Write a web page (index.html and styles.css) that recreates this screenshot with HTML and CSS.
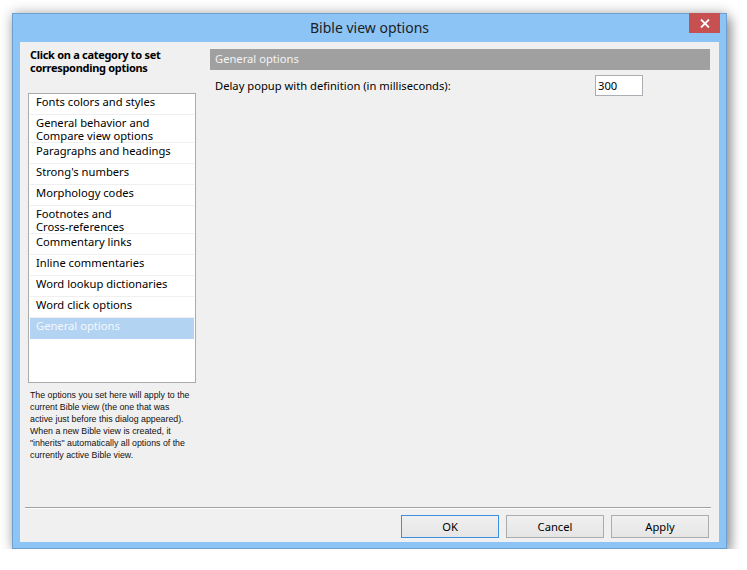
FILE: index.html
```
<!DOCTYPE html>
<html lang="en">
<head>
    <meta charset="UTF-8">
    <title>Bible view options</title>
    <link rel="stylesheet" href="styles.css">
</head>
<body>
    <div class="window">
        <div class="titlebar">
            <span class="title">Bible view options</span>
            <div class="close-btn">
                <svg width="10" height="9" viewBox="0 0 10 9"><path d="M1 0.5 L9 8.5 M9 0.5 L1 8.5" stroke="#fff" stroke-width="1.8" fill="none"/></svg>
            </div>
        </div>
        <div class="content">
            <div class="main">
                <div class="left-col">
                    <div class="left-heading">Click on a category to set<br>corresponding options</div>
                    <div class="cat-list">
                        <div class="cat-item">Fonts colors and styles</div>
                        <div class="cat-item double">General behavior and<br>Compare view options</div>
                        <div class="cat-item">Paragraphs and headings</div>
                        <div class="cat-item">Strong's numbers</div>
                        <div class="cat-item">Morphology codes</div>
                        <div class="cat-item double">Footnotes and<br>Cross-references</div>
                        <div class="cat-item">Commentary links</div>
                        <div class="cat-item">Inline commentaries</div>
                        <div class="cat-item">Word lookup dictionaries</div>
                        <div class="cat-item">Word click options</div>
                        <div class="cat-item selected">General options</div>
                    </div>
                    <div class="note">The options you set here will apply to the<br>current Bible view (the one that was<br>active just before this dialog appeared).<br>When a new Bible view is created, it<br>"inherits" automatically all options of the<br>currently active Bible view.</div>
                </div>
                <div class="right-col">
                    <div class="section-header">General options</div>
                    <div class="option-row">
                        <span class="option-label">Delay popup with definition (in milliseconds):</span>
                        <input class="option-input" type="text" value="300">
                    </div>
                </div>
            </div>
            <div class="separator"></div>
            <div class="buttons">
                <button class="btn default">OK</button>
                <button class="btn">Cancel</button>
                <button class="btn">Apply</button>
            </div>
        </div>
    </div>
</body>
</html>
```
FILE: styles.css
```
html, body { margin: 0; padding: 0; background: #fff; }
body { font-family: "Noto Sans", "Open Sans", sans-serif; font-size: 11.2px; color: #000; }

.window { margin: 13px 0 0 12px; width: 715px; height: 536px; box-sizing: border-box; border: 1px solid #6e9fcf; background: #8cc4f6; padding: 0 7px 6px 7px; box-shadow: 0 0 12px rgba(0,0,0,0.3), 5px 6px 10px rgba(0,0,0,0.28); display: flex; flex-direction: column; }
.titlebar { height: 28px; display: flex; align-items: center; justify-content: center; position: relative; }
.title { font-size: 14px; color: #1e1e1e; margin-top: -1px; }
.close-btn { position: absolute; top: -1px; right: -1px; width: 31px; height: 20px; background: #c75050; display: flex; align-items: center; justify-content: center; }

.content { flex: 1; background: #f0f0f0; display: flex; flex-direction: column; }
.main { height: 465px; display: flex; padding-top: 7px; box-sizing: border-box; }

.left-col { width: 168px; margin-left: 8px; }
.left-heading { font-weight: bold; font-size: 11px; letter-spacing: -0.3px; line-height: 13px; padding-left: 2px; height: 26px; margin: -1px 0 19px 0; white-space: nowrap; }
.cat-list { height: 290px; box-sizing: border-box; border: 1px solid #ababab; background: #fff; padding: 0 1px; }
.cat-item { height: 21px; box-sizing: border-box; padding: 1px 0 0 6px; line-height: 13px; border-bottom: 1px solid #efefef; white-space: nowrap; }
.cat-item.double { height: 28px; }
.cat-item.selected { background: #b3d3f2; color: #f4f8fc; border-bottom: none; }
.note { font-family: "Liberation Sans", Arial, sans-serif; font-size: 8.8px; line-height: 12px; margin-top: 6px; padding-left: 2px; color: #111; white-space: nowrap; }

.right-col { flex: 1; margin: 0 9px 0 14px; }
.section-header { height: 21px; background: #a0a0a0; color: #f4f4f4; line-height: 20px; padding-left: 5px; }
.option-row { display: flex; align-items: center; margin-top: 5px; padding-left: 5px; }
.option-label { width: 380px; }
.option-input { width: 48px; height: 21px; box-sizing: border-box; border: 1px solid #abadb3; background: #fff; font: inherit; padding: 0 2px; outline: none; }

.separator { margin: 0 8px 0 5px; border-top: 1px solid #a0a0a0; border-bottom: 1px solid #fff; }
.buttons { display: flex; justify-content: flex-end; gap: 7px; padding: 6px 10px 0 0; }
.btn { width: 98px; height: 23px; border: 1px solid #acacac; background: linear-gradient(#f0f0f0, #e5e5e5); font: inherit; color: #000; padding: 0; }
.btn.default { border-color: #3c8ee0; }
```
